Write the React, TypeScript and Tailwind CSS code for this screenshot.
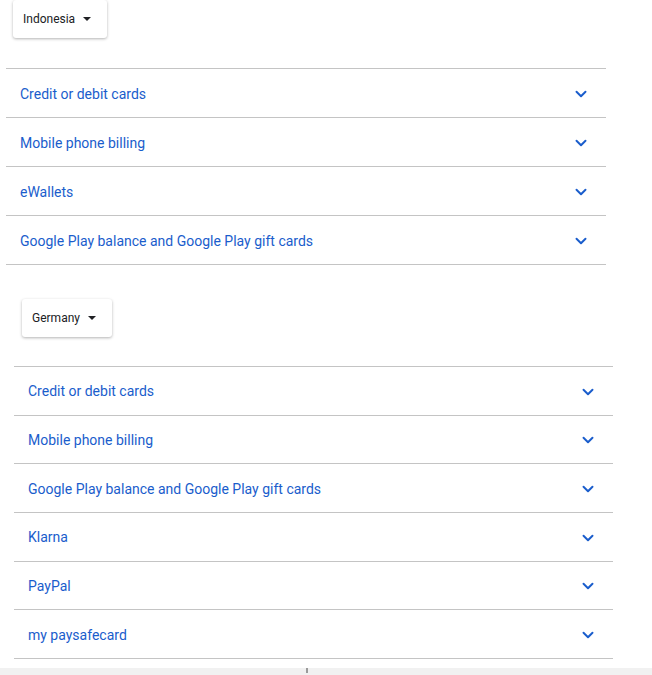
import { ChevronDown } from 'lucide-react';

const indonesia = [
  'Credit or debit cards',
  'Mobile phone billing',
  'eWallets',
  'Google Play balance and Google Play gift cards',
];

const germany = [
  'Credit or debit cards',
  'Mobile phone billing',
  'Google Play balance and Google Play gift cards',
  'Klarna',
  'PayPal',
  'my paysafecard',
];

function CountrySelect({ name }: { name: string }) {
  return (
    <div className="inline-flex h-[38px] items-center gap-[8px] rounded-[3px] bg-white pl-[10px] pr-[16px] shadow-[0_1px_3px_rgba(0,0,0,0.3)] text-[12px] text-[#202124]">
      <span>{name}</span>
      <span className="h-0 w-0 border-x-[4px] border-t-[4px] border-x-transparent border-t-[#202124]" />
    </div>
  );
}

function Methods({ items, rowH }: { items: string[]; rowH: string }) {
  return (
    <div className="border-t border-[#c4c4c4]">
      {items.map((item) => (
        <div
          key={item}
          className={`flex items-center justify-between border-b border-[#c4c4c4] pl-[14px] pr-[16px] pt-[2px] ${rowH}`}
        >
          <span className="text-[14px] text-[#1a5dcc]">{item}</span>
          <ChevronDown className="h-[18px] w-[18px] text-[#1a5dcc]" strokeWidth={2.6} />
        </div>
      ))}
    </div>
  );
}

export default function App() {
  return (
    <div className="relative h-[675px] w-[652px] overflow-hidden bg-white font-['Roboto',sans-serif]">
      <div className="ml-[6px] w-[600px]">
        <div className="pl-[7px]">
          <CountrySelect name="Indonesia" />
        </div>
        <div className="mt-[30px]">
          <Methods items={indonesia} rowH="h-[49px]" />
        </div>
      </div>
      <div className="ml-[14px] mt-[34px] w-[599px]">
        <div className="pl-[8px]">
          <CountrySelect name="Germany" />
        </div>
        <div className="mt-[29px]">
          <Methods items={germany} rowH="h-[48.67px]" />
        </div>
      </div>
      <div className="absolute bottom-0 left-0 h-[7px] w-full bg-[#f1f1f1]">
        <div className="ml-[306px] h-[5px] w-[2px] bg-[#9a9a9a]" />
      </div>
    </div>
  );
}
